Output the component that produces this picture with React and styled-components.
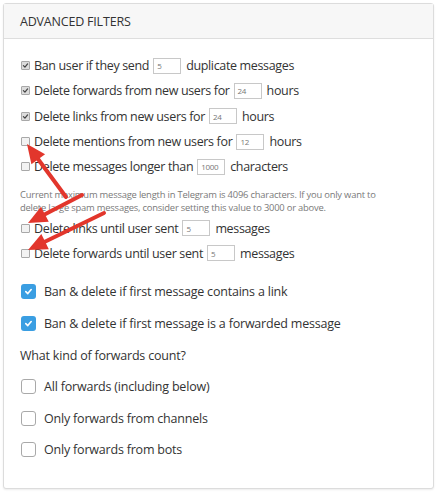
import React from "react"
import styled, { createGlobalStyle } from "styled-components"

const GlobalStyle = createGlobalStyle`
    html, body {
        margin: 0;
        padding: 0;
        background: #fff;
    }
    body {
        font-family: "Open Sans", "Noto Sans", sans-serif;
        color: #333;
    }
`

const Page = styled.div`
    position: relative;
    width: 437px;
    height: 493px;
    padding: 3px;
    box-sizing: border-box;
`

const Card = styled.div`
    width: 431px;
    height: 486px;
    box-sizing: border-box;
    border: 1px solid #dcdcdc;
    border-radius: 3px;
    box-shadow: 0 1px 2px rgba(0,0,0, .08);
    background: #fff;
`

const Header = styled.div`
    height: 34px;
    display: flex;
    align-items: center;
    padding: 0 16px;
    background: #f7f7f7;
    border-bottom: 1px solid #dedede;
    font-size: 12.5px;
    letter-spacing: -0.2px;
    color: #333;
    text-transform: uppercase;
`

const Body = styled.div`
    padding: 14px 16px 0;
`

const SmallRow = styled.label`
    display: flex;
    align-items: center;
    height: 25.3px;
    font-size: 12.5px;
    letter-spacing: -0.35px;
    color: #333;
    white-space: nowrap;
`

const SmallBox = styled.span`
    width: 7px;
    height: 7px;
    margin: 0 4px 0 1px;
    border: 1px solid #a8a8a8;
    border-radius: 1px;
    background: ${p => p.checked ? "#dcdcdc" : "#f2f2f2"};
    display: flex;
    align-items: center;
    justify-content: center;
    flex-shrink: 0;
    svg {
        width: 7px;
        height: 7px;
    }
`

const NumInput = styled.span`
    display: inline-flex;
    align-items: center;
    width: 28px;
    height: 16px;
    box-sizing: border-box;
    margin: 0 5px 0 4px;
    padding-left: 3px;
    border: 1px solid #c8c8c8;
    font-size: 8px;
    color: #777;
    background: #fff;
`

const Note = styled.p`
    margin: 9px 0 1px;
    font-size: 9.4px;
    line-height: 13px;
    color: #7a7a7a;
    letter-spacing: -0.2px;
    white-space: nowrap;
`

const BigRow = styled.label`
    display: flex;
    align-items: center;
    gap: 8px;
    height: 31.6px;
    font-size: 12.5px;
    letter-spacing: -0.2px;
    color: #333;
    margin-top: ${p => p.$first ? "10px" : "0"};
`

const BigBox = styled.span`
    width: 15px;
    height: 15px;
    box-sizing: border-box;
    margin-left: 1px;
    border-radius: 3px;
    border: ${p => p.checked ? "none" : "1px solid #a9a9a9"};
    background: ${p => p.checked ? "#3a9ee2" : "#fff"};
    display: flex;
    align-items: center;
    justify-content: center;
    svg {
        width: 9px;
        height: 9px;
    }
`

const Question = styled.div`
    height: 31.6px;
    display: flex;
    align-items: center;
    font-size: 12.5px;
    letter-spacing: -0.2px;
    color: #333;
`

const Overlay = styled.svg`
    position: absolute;
    left: 0;
    top: 0;
    pointer-events: none;
`

const Tick = ({ color }) => (
    <svg viewBox="0 0 10 10">
        <path d="M2 5.2 L4.2 7.3 L8 2.8" fill="none" stroke={color} strokeWidth="1.8" strokeLinecap="round" strokeLinejoin="round" />
    </svg>
)

const Small = ({ checked, children }) => (
    <SmallRow>
        <SmallBox checked={checked}>{checked && <Tick color="#444" />}</SmallBox>
        {children}
    </SmallRow>
)

const Big = ({ checked, first, children }) => (
    <BigRow $first={first}>
        <BigBox checked={checked}>{checked && <Tick color="#fff" />}</BigBox>
        {children}
    </BigRow>
)

const Arrow = ({ from, to }) => {
    const dx = to[0] - from[0]
    const dy = to[1] - from[1]
    const len = Math.hypot(dx, dy)
    const ux = dx / len
    const uy = dy / len
    const hl = 19
    const hw = 8.5
    const bx = to[0] - ux * hl
    const by = to[1] - uy * hl
    const pts = [
        `${to[0]},${to[1]}`,
        `${bx - uy * hw},${by + ux * hw}`,
        `${bx + uy * hw},${by - ux * hw}`,
    ].join(" ")
    return (
        <g>
            <line x1={from[0]} y1={from[1]} x2={bx + ux * 2} y2={by + uy * 2} stroke="#e2362c" strokeWidth="4" strokeLinecap="round" />
            <polygon points={pts} fill="#e2362c" />
        </g>
    )
}

const App = () => {
    return (
        <Page>
            <GlobalStyle />
            <Card>
                <Header>Advanced Filters</Header>
                <Body>
                    <Small checked>Ban user if they send<NumInput>5</NumInput>duplicate messages</Small>
                    <Small checked>Delete forwards from new users for<NumInput>24</NumInput>hours</Small>
                    <Small checked>Delete links from new users for<NumInput>24</NumInput>hours</Small>
                    <Small>Delete mentions from new users for<NumInput>12</NumInput>hours</Small>
                    <Small>Delete messages longer than<NumInput>1000</NumInput>characters</Small>
                    <Note>
                        Current maximum message length in Telegram is 4096 characters. If you only want to<br />
                        delete large spam messages, consider setting this value to 3000 or above.
                    </Note>
                    <Small>Delete links until user sent<NumInput>5</NumInput>messages</Small>
                    <Small>Delete forwards until user sent<NumInput>5</NumInput>messages</Small>
                    <Big checked first>Ban &amp; delete if first message contains a link</Big>
                    <Big checked>Ban &amp; delete if first message is a forwarded message</Big>
                    <Question>What kind of forwards count?</Question>
                    <Big>All forwards (including below)</Big>
                    <Big>Only forwards from channels</Big>
                    <Big>Only forwards from bots</Big>
                </Body>
            </Card>
            <Overlay width="437" height="493">
                <Arrow from={[66, 197]} to={[27, 144]} />
                <Arrow from={[82, 195]} to={[28, 223]} />
                <Arrow from={[104, 213]} to={[28, 250]} />
            </Overlay>
        </Page>
    )
}

export default App
